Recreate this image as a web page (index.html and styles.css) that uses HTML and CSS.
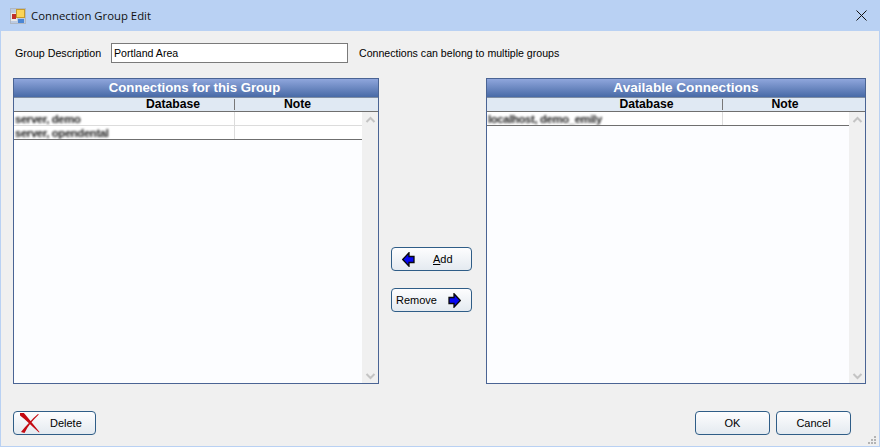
FILE: index.html
```html
<!DOCTYPE html>
<html lang="en">
<head>
<meta charset="utf-8">
<title>Connection Group Edit</title>
<link rel="stylesheet" href="styles.css">
</head>
<body>
<div class="window">
  <header class="titlebar">
    <svg class="app-icon" width="16" height="16" viewBox="0 0 16 16">
      <rect x="0.5" y="0.5" width="15" height="15" fill="#bccbe2" stroke="#b0b8c4"/>
      <rect x="1" y="5" width="6" height="8" fill="#e8e8e8"/>
      <rect x="2" y="6" width="4" height="5" fill="#c0302a"/>
      <rect x="6" y="1" width="9" height="9" fill="#c69a2a"/>
      <rect x="7" y="2" width="7" height="7" fill="#fbd457"/>
      <rect x="8" y="11" width="6" height="4" fill="#4a86d4"/>
    </svg>
    <span class="title-text">Connection Group Edit</span>
    <svg class="close" width="11" height="11" viewBox="0 0 11 11"><path d="M.5.5l10 10M10.500.5l-10 10" stroke="#111" stroke-width="1" fill="none"/></svg>
  </header>
  <main class="content">
    <div class="desc-row">
      <label class="desc-label">Group Description</label>
      <input class="desc-input" type="text" value="Portland Area">
      <span class="desc-note">Connections can belong to multiple groups</span>
    </div>
    <div class="lists">
      <section class="grid grid-left">
        <h2 class="grid-title">Connections for this Group</h2>
        <div class="grid-head">
          <div class="col-db">Database</div>
          <div class="col-note">Note</div>
        </div>
        <div class="grid-body">
          <div class="rows">
            <div class="row"><div class="cell-db"><span class="blur">server, demo</span></div><div class="cell-note"></div></div>
            <div class="row row-selected"><div class="cell-db"><span class="blur">server, opendental</span></div><div class="cell-note"></div></div>
          </div>
          <div class="scrollbar">
            <svg width="11" height="7" viewBox="0 0 11 7"><path d="M1.500 6l4-4 4 4" fill="none" stroke="#c4c4c4" stroke-width="2"/></svg>
            <svg width="11" height="7" viewBox="0 0 11 7"><path d="M1.500 1l4 4 4-4" fill="none" stroke="#c4c4c4" stroke-width="2"/></svg>
          </div>
        </div>
      </section>
      <div class="mid-buttons">
        <button class="btn btn-move" type="button">
          <svg class="arrow" width="13" height="15" viewBox="0 0 13 15"><path d="M7 .8L.7 7.500 7 14.200v-3.700h5v-6H7z" fill="#0808f4" stroke="#0a0a0a" stroke-width="1.300"/></svg>
          <span class="btn-add-label"><u>A</u>dd</span>
        </button>
        <button class="btn btn-move" type="button">
          <span class="btn-remove-label">Remove</span>
          <svg class="arrow" width="13" height="15" viewBox="0 0 13 15"><path d="M6 .8l6.300 6.700L6 14.200v-3.700H1v-6h5z" fill="#0808f4" stroke="#0a0a0a" stroke-width="1.300"/></svg>
        </button>
      </div>
      <section class="grid grid-right">
        <h2 class="grid-title">Available Connections</h2>
        <div class="grid-head">
          <div class="col-db">Database</div>
          <div class="col-note">Note</div>
        </div>
        <div class="grid-body">
          <div class="rows">
            <div class="row row-selected"><div class="cell-db"><span class="blur">localhost, demo_emily</span></div><div class="cell-note"></div></div>
          </div>
          <div class="scrollbar">
            <svg width="11" height="7" viewBox="0 0 11 7"><path d="M1.500 6l4-4 4 4" fill="none" stroke="#c4c4c4" stroke-width="2"/></svg>
            <svg width="11" height="7" viewBox="0 0 11 7"><path d="M1.500 1l4 4 4-4" fill="none" stroke="#c4c4c4" stroke-width="2"/></svg>
          </div>
        </div>
      </section>
    </div>
    <footer class="footer">
      <button class="btn btn-delete" type="button">
        <svg class="x-icon" width="20" height="21" viewBox="0 0 20 21"><path d="M0 0l3.500-.5C8 5 14 12 19.500 19l-.5.500C13 14 6 7 0 2.500zM18 1l.8.6C13 7 8 13 4.500 20L1 19C6 13 12 6 18 1z" fill="#c40a12"/></svg>
        <span>Delete</span>
      </button>
      <div class="footer-right">
        <button class="btn btn-footer" type="button">OK</button>
        <button class="btn btn-footer" type="button">Cancel</button>
      </div>
    </footer>
  </main>
  <svg class="grip" width="10" height="10" viewBox="0 0 10 10" fill="#b4b4b4"><rect x="7" y="1" width="2" height="2"/><rect x="4" y="4" width="2" height="2"/><rect x="7" y="4" width="2" height="2"/><rect x="1" y="7" width="2" height="2"/><rect x="4" y="7" width="2" height="2"/><rect x="7" y="7" width="2" height="2"/></svg>
</div>
</body>
</html>
```
FILE: styles.css
```css
* { box-sizing: border-box; }
html, body { margin: 0; padding: 0; }
body { width: 880px; height: 447px; overflow: hidden; font-family: "Liberation Sans", Arial, sans-serif; font-size: 10.6px; color: #000; }
.window { position: relative; width: 880px; height: 447px; background: #f0f0f0; border: 1px solid #b9d1f3; border-top: 0; display: flex; flex-direction: column; }
.titlebar { height: 31px; margin: 0 -1px; background: #b9d1f3; display: flex; align-items: center; padding: 0 13px 0 10px; flex: none; }
.app-icon { flex: none; margin-right: 5px; }
.title-text { font-family: "Open Sans", sans-serif; font-size: 11.35px; flex: 1; color: #111; }
.close { flex: none; }
.content { flex: 1; display: flex; flex-direction: column; padding: 12px 13px 0 12px; }
.desc-row { display: flex; align-items: center; height: 20px; flex: none; }
.desc-label { width: 98px; padding-left: 2px; font-size: 10.7px; }
.desc-input { width: 237px; height: 20px; border: 1px solid #7a7a7a; background: #fff; padding: 0 2px; font: inherit; color: #000; outline: 0; }
.desc-note { margin-left: 11px; }
.lists { display: flex; margin-top: 15px; height: 306px; flex: none; }
.grid { border: 1px solid #4a6494; display: flex; flex-direction: column; background: #fff; flex: none; }
.grid-left { width: 366px; }
.grid-right { width: 380px; }
.grid-title { margin: 0; height: 18px; flex: none; text-align: center; color: #fff; font-family: "Liberation Sans", sans-serif; font-size: 13.2px; line-height: 18px; font-weight: 700; background: linear-gradient(#8fa6dc, #486aa6); }
.grid-left .grid-title { padding-right: 3px; }
.grid-right .grid-title { padding-left: 20px; font-size: 13.6px; }
.grid-head { display: flex; height: 15px; flex: none; background: #e0e9f3; border-top: 1px solid #7f8ea3; border-bottom: 1px solid #6f6f6f; font-family: "Liberation Sans", sans-serif; font-size: 12.2px; line-height: 13px; font-weight: 700; color: #000; text-align: center; }
.col-db { width: 221px; border-right: 1px solid #777; margin: 1px 0; line-height: 11px; padding-left: 98px; }
.col-note { flex: 1; line-height: 13px; padding-right: 18px; }
.grid-right .col-db { width: 236px; padding-left: 84px; }
.grid-body { flex: 1; display: flex; background: #fcfdff; min-height: 0; }
.rows { flex: 1; }
.row { display: flex; height: 14px; background: #fff; border-bottom: 1px solid #dcdcdc; }
.row-selected { border-bottom: 1px solid #6f6f6f; }
.cell-db { width: 221px; border-right: 1px solid #dcdcdc; padding-left: 1px; line-height: 14px; overflow: hidden; white-space: nowrap; font-size: 11.3px; font-weight: 700; letter-spacing: -0.35px; }
.grid-right .cell-db { width: 236px; }
.cell-note { flex: 1; }
.blur { display: inline-block; filter: blur(0.9px); color: #222; }
.scrollbar { width: 16px; flex: none; background: #f0f0f0; display: flex; flex-direction: column; justify-content: space-between; align-items: center; padding: 4px 0 3px; }
.mid-buttons { width: 105px; flex: none; display: flex; flex-direction: column; align-items: center; gap: 17px; padding-top: 169px; margin-right: 2px; }
.btn { border: 1px solid #2f5d87; border-radius: 4px; background: linear-gradient(#fdfdfe, #e4eaf0); font: inherit; font-size: 11px; color: #000; padding: 0 0 1px; display: flex; align-items: center; cursor: default; }
.btn-move { width: 81px; height: 24px; }
.arrow { flex: none; margin-top: 1px; }
.btn-move:first-child .arrow { margin-left: 10px; }
.btn-add-label { margin-left: 18px; }
.btn-remove-label { margin-left: 4px; }
.btn-move:last-child .arrow { margin-left: 11px; }
.footer { display: flex; justify-content: space-between; margin-top: 27px; flex: none; padding-right: 15px; }
.footer-right { display: flex; gap: 6px; }
.btn-delete { width: 83px; height: 24px; position: relative; }
.x-icon { position: absolute; left: 6px; top: 1px; }
.btn-delete span { margin-left: 36px; }
.btn-footer { width: 75px; height: 24px; justify-content: center; }
.grip { position: absolute; right: 2px; bottom: 1px; }
```
